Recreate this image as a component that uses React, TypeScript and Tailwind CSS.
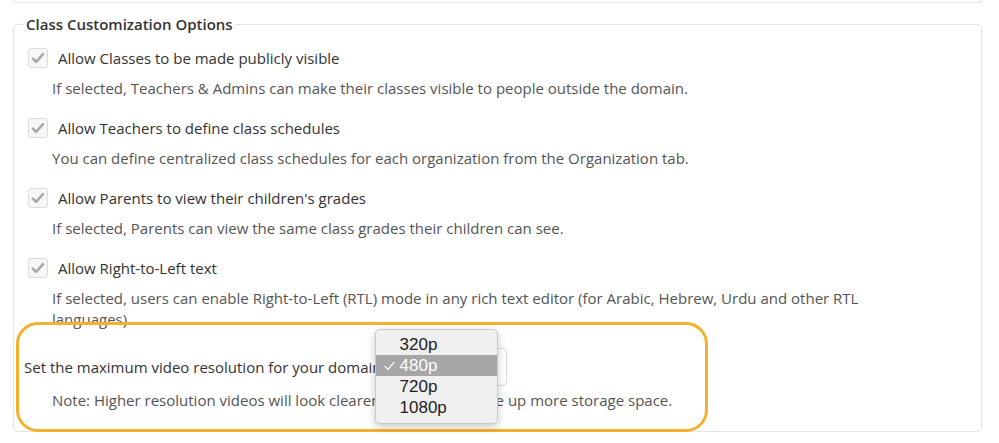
import React from 'react'

const options = [
  {
    label: 'Allow Classes to be made publicly visible',
    help: 'If selected, Teachers & Admins can make their classes visible to people outside the domain.',
  },
  {
    label: 'Allow Teachers to define class schedules',
    help: 'You can define centralized class schedules for each organization from the Organization tab.',
  },
  {
    label: "Allow Parents to view their children's grades",
    help: 'If selected, Parents can view the same class grades their children can see.',
  },
  {
    label: 'Allow Right-to-Left text',
    help: 'If selected, users can enable Right-to-Left (RTL) mode in any rich text editor (for Arabic, Hebrew, Urdu and other RTL languages).',
  },
]

const resolutions = ['320p', '480p', '720p', '1080p']

function Checkbox() {
  return (
    <span className="flex h-[20px] w-[20px] shrink-0 items-center justify-center rounded-[3px] border border-[#dcdcdc] bg-[#f7f7f7]">
      <svg className="h-[16px] w-[16px]" viewBox="0 0 16 16" fill="none">
        <path d="M2.8 8.6 L6.2 11.8 L13 4.2" stroke="#a9a9a9" strokeWidth={2.6} strokeLinecap="round" strokeLinejoin="round" />
      </svg>
    </span>
  )
}

function ResolutionMenu() {
  return (
    <div className="absolute left-[-14px] top-[-20px] z-20 w-[123px] rounded-[5px] border border-[#c9c9c9] bg-[#efefef] pb-[5px] pt-[4px] font-['Liberation_Sans',sans-serif] text-[17px] text-[#222] shadow-[0_3px_8px_rgba(0,0,0,0.22)]">
      {resolutions.map(r => (
        <div
          key={r}
          className={`relative flex h-[21px] items-center pl-[24px] ${r === '480p' ? 'bg-[#a6a6a8] text-white' : ''}`}
        >
          {r === '480p' && (
            <svg className="absolute left-[8px] top-[6px] h-[10px] w-[11px]" viewBox="0 0 11 10" fill="none">
              <path d="M1 5.4 L4 8.4 L10 1.4" stroke="white" strokeWidth={1.3} strokeLinecap="round" strokeLinejoin="round" />
            </svg>
          )}
          {r}
        </div>
      ))}
    </div>
  )
}

export default function App() {
  return (
    <div className="relative h-[443px] w-[999px] overflow-hidden bg-white font-['Open_Sans',sans-serif] text-[15px]">
      {/* bottom edge of the panel above */}
      <div className="ml-[13px] h-[3px] w-[969px] rounded-b-[4px] border-x border-b border-[#e4e4e4]" />

      <fieldset className="ml-[13px] mt-[11px] w-[969px] rounded-[5px] border border-[#e4e4e4] px-[10px] pb-[20px]">
        <legend className="px-[2px] font-semibold leading-[20px] text-[#333]">Class Customization Options</legend>

        <div className="pl-[4px] pt-[14px]">
          {options.map((o, i) => (
            <div key={o.label} className={i > 0 ? 'mt-[19px]' : ''}>
              <div className="flex h-[20px] items-center gap-[10px]">
                <Checkbox />
                <span className="leading-[20px] text-[#333]">{o.label}</span>
              </div>
              <p className="ml-[24px] mt-[10px] w-[830px] leading-[21px] text-[#555]">{o.help}</p>
            </div>
          ))}
        </div>

        <div className="mt-[18px] flex items-center">
          <span className="leading-[20px] text-[#333]">Set the maximum video resolution for your domain</span>
          <div className="relative ml-[6px] h-[38px] w-[119px] rounded-[4px] border border-[#d6d6d6] bg-white">
            <ResolutionMenu />
          </div>
        </div>
        <p className="ml-[28px] mt-[4px] leading-[21px] text-[#555]">
          Note: Higher resolution videos will look clearer, but they will take up more storage space.
        </p>
      </fieldset>

      {/* highlight annotation */}
      <div className="pointer-events-none absolute left-[16px] top-[322px] h-[110px] w-[692px] rounded-[22px] border-[3px] border-[#f6b02c]" />
    </div>
  )
}
